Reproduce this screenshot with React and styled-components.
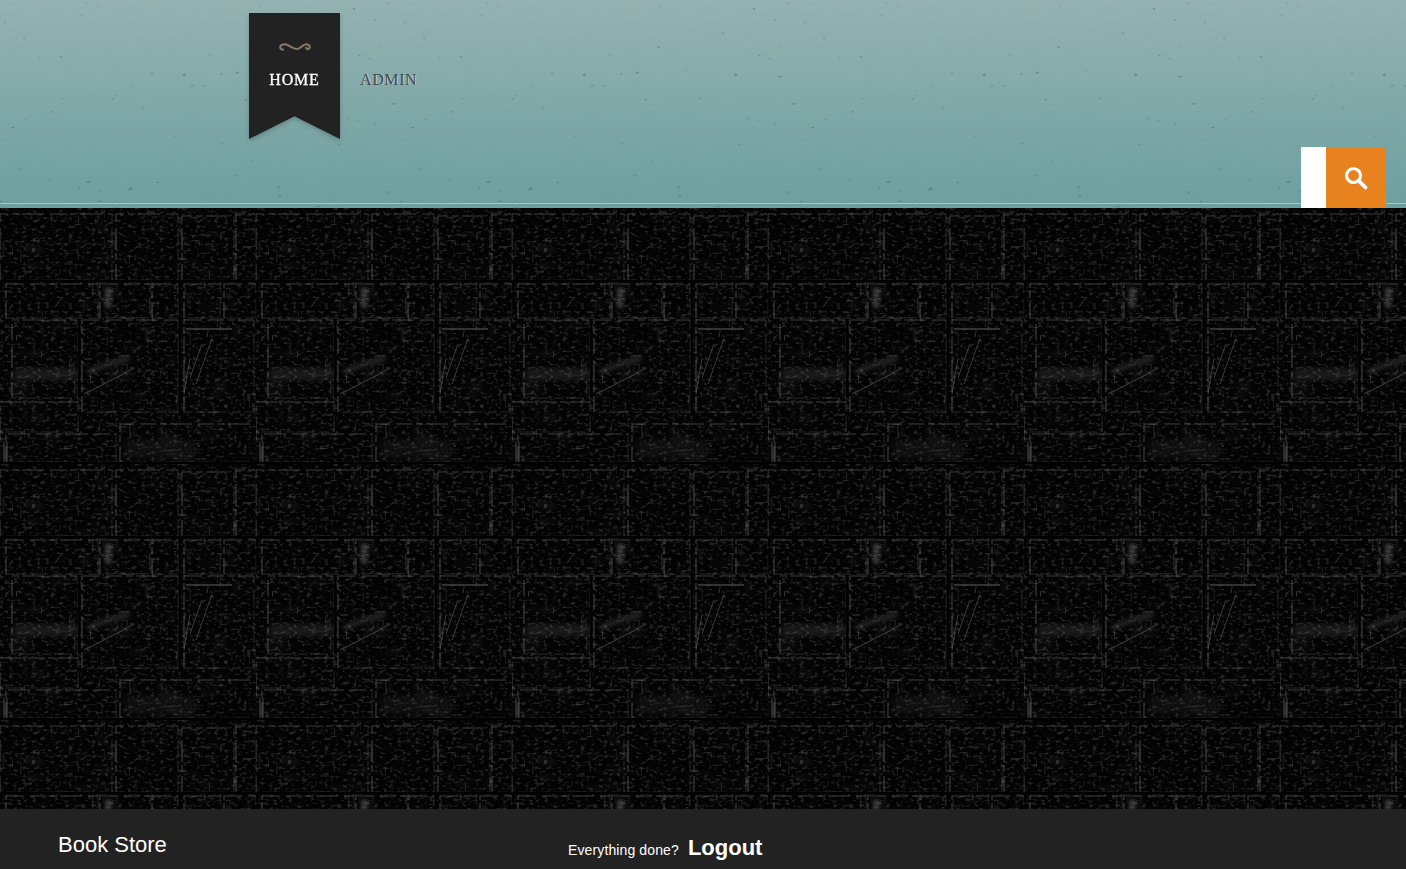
import React from "react";
import styled, { createGlobalStyle } from "styled-components";

// small seeded random so the textures come out the same every run
const makeRandom = (seed) => () => {
  seed = (seed * 16807) % 2147483647;
  return (seed - 1) / 2147483646;
};

const toDataUrl = (w, h, body) =>
  `url("data:image/svg+xml,${encodeURIComponent(
    `<svg xmlns='http://www.w3.org/2000/svg' width='${w}' height='${h}'>${body}</svg>`
  )}")`;

// stone blocks of the wall tile, x y w h
const stones = [
  [0, 6, 112, 66], [116, 6, 62, 66], [182, 8, 52, 64], [236, 6, 20, 66],
  [6, 76, 92, 34], [100, 76, 50, 34], [152, 76, 26, 34], [184, 76, 36, 34], [224, 76, 32, 34],
  [12, 112, 66, 78], [82, 112, 96, 92], [184, 112, 70, 92],
  [0, 194, 78, 30], [6, 226, 110, 28], [120, 216, 142, 38],
];

const buildWall = () => {
  const rnd = makeRandom(4711);
  let out =
    "<defs><filter id='s' x='-5%' y='-5%' width='110%' height='110%'><feGaussianBlur stdDeviation='0.6'/></filter>" +
    "<filter id='b' x='-5%' y='-5%' width='110%' height='110%'><feGaussianBlur stdDeviation='2'/></filter>" +
    "<filter id='g' x='0' y='0' width='100%' height='100%'><feTurbulence type='fractalNoise' baseFrequency='0.22 0.34' numOctaves='2' seed='8' stitchTiles='stitch'/>" +
    "<feColorMatrix values='0 0 0 0 0.6 0 0 0 0 0.6 0 0 0 0 0.6 6 0 0 0 -3.4'/><feGaussianBlur stdDeviation='0.5'/></filter></defs>" +
    "<rect width='256' height='256' fill='#030303'/>" +
    "<rect width='256' height='256' filter='url(#g)' opacity='0.16'/>";

  // dull patches inside the stones
  out += "<g filter='url(#b)'>";
  for (let i = 0; i < 70; i++) {
    const x = rnd() * 256;
    const y = rnd() * 256;
    out += `<rect x='${x.toFixed(1)}' y='${y.toFixed(1)}' width='${(5 + rnd() * 20).toFixed(1)}' height='${(2 + rnd() * 9).toFixed(1)}' fill='#fff' opacity='${(0.01 + rnd() * 0.035).toFixed(3)}'/>`;
  }
  out += "<path d='M88 164L108 156L130 150' stroke='#777' stroke-width='5' fill='none' opacity='0.3'/>";
  out += "<path d='M14 160H78V172H14Z' fill='#777' opacity='0.18'/>";
  out += "<path d='M108 80V100' stroke='#999' stroke-width='5' opacity='0.4'/>";
  out += "<path d='M126 232H196V250H126Z' fill='#666' opacity='0.12'/>";
  out += "</g>";

  // scratches, mostly along the axes
  out += "<g filter='url(#s)'>";
  for (let i = 0; i < 560; i++) {
    const x = rnd() * 256;
    const y = rnd() * 256;
    const len = 2 + rnd() * 8;
    const kind = rnd();
    const dx = kind < 0.5 ? len : kind < 0.85 ? 0 : len * 0.7;
    const dy = kind < 0.5 ? 0 : kind < 0.85 ? len : -len * 0.7;
    const shade = 70 + Math.floor(rnd() * 80);
    out += `<path d='M${x.toFixed(1)} ${y.toFixed(1)}l${dx.toFixed(1)} ${dy.toFixed(1)}' stroke='rgb(${shade},${shade},${shade})' opacity='${(0.1 + rnd() * 0.22).toFixed(2)}'/>`;
  }

  // block edges, lit on the top and left, broken up
  stones.forEach(([x, y, w, h]) => {
    out += `<path d='M${x} ${y + h}V${y}H${x + w}' fill='none' stroke='#888' stroke-width='1.2' stroke-dasharray='16 4 7 3 22 6' opacity='0.42'/>`;
    out += `<path d='M${x + w} ${y}V${y + h}H${x}' fill='none' stroke='#777' stroke-dasharray='9 5 18 3' opacity='0.3'/>`;
  });

  // marks that stand out on the real tile
  out += "<path d='M84 186L112 172L134 160' stroke='#777' fill='none' opacity='0.5'/>";
  out += "<path d='M190 150L184 186M202 136L190 170M212 130L196 176' stroke='#888' fill='none' opacity='0.42'/>";
  out += "<path d='M186 121H232' stroke='#999' stroke-width='1.5' opacity='0.42'/>";
  out += "<circle cx='149' cy='167' r='5' fill='none' stroke='#888' stroke-dasharray='1 1' opacity='0.45'/>";
  out += "<path d='M4 234V254M7 234V254' stroke='#888' opacity='0.5'/>";
  out += "</g>";

  // mortar gaps
  out += "<path d='M0 73H256M180 76V204M79 112V190M0 255H256' stroke='#000' stroke-width='2.5'/>";
  return toDataUrl(256, 256, out);
};

const buildPaper = () => {
  const rnd = makeRandom(91);
  let out =
    "<defs><filter id='p'><feGaussianBlur stdDeviation='0.5'/></filter>" +
    "<filter id='n' x='0' y='0' width='100%' height='100%'><feTurbulence type='fractalNoise' baseFrequency='0.05 0.45' numOctaves='2' seed='3' stitchTiles='stitch'/>" +
    "<feColorMatrix values='0 0 0 0 0.15 0 0 0 0 0.3 0 0 0 0 0.3 1.6 0 0 0 -0.6'/></filter></defs>";
  out += "<rect width='400' height='208' filter='url(#n)' opacity='0.12'/><g filter='url(#p)'>";
  for (let i = 0; i < 75; i++) {
    const x = rnd() * 400;
    const y = rnd() * 208;
    const size = 0.5 + rnd() * 0.7;
    out += `<ellipse cx='${x.toFixed(1)}' cy='${y.toFixed(1)}' rx='${(size * (1 + rnd())).toFixed(1)}' ry='${size.toFixed(1)}' fill='#2f5355' opacity='${(0.1 + rnd() * 0.3).toFixed(2)}'/>`;
  }
  out += "</g>";
  return toDataUrl(400, 208, out);
};

const GlobalStyle = createGlobalStyle`
  html,
  body {
    margin: 0;
    padding: 0;
    height: 100%;
  }

  body {
    background: #050505;
    font-family: "Liberation Sans", Arial, sans-serif;
  }
`;

const Page = styled.div`
  display: flex;
  flex-direction: column;
  min-height: 100vh;
`;

const Header = styled.header`
  position: relative;
  box-sizing: border-box;
  height: 208px;
  display: flex;
  align-items: flex-end;
  justify-content: space-between;
  padding: 0 20px 0 249px;
  background-image: ${buildPaper()}, linear-gradient(#96b3b2 0%, #87acab 35%, #77a4a4 75%, #6e9f9f 100%);

  &::after {
    content: "";
    position: absolute;
    left: 0;
    right: 0;
    bottom: 4px;
    height: 1px;
    background: #a9c6c4;
  }
`;

const Nav = styled.nav`
  align-self: flex-start;
  display: flex;
  align-items: flex-start;
  padding-top: 13px;
`;

const NavItem = styled.a`
  position: relative;
  z-index: 0;
  box-sizing: border-box;
  display: flex;
  flex-direction: column;
  align-items: center;
  font-family: "Liberation Serif", "Times New Roman", serif;
  font-size: 16px;
  letter-spacing: ${(p) => (p.$active ? "0.8px" : "0.6px")};
  line-height: 18px;
  text-transform: uppercase;
  width: ${(p) => (p.$active ? "91px" : "auto")};
  height: ${(p) => (p.$active ? "126px" : "auto")};
  padding-top: ${(p) => (p.$active ? "28px" : "58px")};
  margin-right: ${(p) => (p.$active ? "20px" : "0")};
  color: ${(p) => (p.$active ? "#ffffff" : "#414c4d")};
  text-shadow: ${(p) => (p.$active ? "none" : "1px 0 0 rgba(225, 240, 240, 0.55)")};
  -webkit-text-stroke: ${(p) => (p.$active ? "0.3px #ffffff" : "0")};
  filter: ${(p) => (p.$active ? "drop-shadow(0 2px 2px rgba(30, 50, 50, 0.3))" : "none")};

  &::before {
    content: "";
    display: ${(p) => (p.$active ? "block" : "none")};
    position: absolute;
    inset: 0;
    z-index: -1;
    background: #222222;
    clip-path: polygon(0 0, 100% 0, 100% 100%, 50% 82%, 0 100%);
  }
`;

const Flourish = styled.svg`
  display: block;
  width: 34px;
  height: 12px;
  margin-bottom: 18px;
`;

const SearchForm = styled.form`
  position: relative;
  z-index: 1;
  display: flex;
  height: 61px;
`;

const SearchInput = styled.input`
  box-sizing: border-box;
  width: 25px;
  padding: 0;
  border: 0;
  outline: 0;
  background: #ffffff;
`;

const SearchButton = styled.button`
  width: 60px;
  padding: 0 1px 0 0;
  border: 0;
  background: #e8821f;
  display: flex;
  align-items: center;
  justify-content: center;
`;

const Main = styled.main`
  flex: 1;
  background-color: #050505;
  background-image: ${buildWall()};
  background-repeat: repeat;
`;

const Footer = styled.footer`
  box-sizing: border-box;
  height: 60px;
  flex-shrink: 0;
  display: flex;
  background: #222222;
  color: #ffffff;
  padding-left: 58px;
`;

const Brand = styled.div`
  width: 510px;
  padding-top: 22px;
  font-size: 22px;
  line-height: 28px;
`;

const Farewell = styled.div`
  padding-top: 25px;
  display: flex;
  align-items: baseline;
  gap: 9px;
  font-size: 14px;
  line-height: 28px;
  letter-spacing: 0.12px;
`;

const Logout = styled.a`
  font-size: 22px;
  font-weight: bold;
  letter-spacing: 0;
`;

const App = () => {
  return (
    <Page>
      <GlobalStyle />
      <Header>
        <Nav>
          <NavItem $active>
            <Flourish viewBox="0 0 34 12" fill="none">
              <path
                d="M5 8.6C2.8 8.8 1.6 7 2.4 5.2C3.3 3.2 6.6 2.9 9 3.8C12.5 5.1 15 8 19 8C23 8 24.6 3 28.4 3.2C31 3.4 32.4 5.4 31.4 7.2C30.6 8.6 28.4 8.4 28.2 6.8"
                stroke="#857a6a"
                strokeWidth="2.1"
                strokeLinecap="round"
              />
            </Flourish>
            Home
          </NavItem>
          <NavItem>Admin</NavItem>
        </Nav>
        <SearchForm>
          <SearchInput type="text" />
          <SearchButton type="button">
            <svg width="26" height="26" viewBox="0 0 26 26" fill="none">
              <circle cx="10.5" cy="10.5" r="7" stroke="#fff" strokeWidth="3.2" />
              <path d="M15.8 15.8L22.5 22.5" stroke="#fff" strokeWidth="3.8" strokeLinecap="round" />
            </svg>
          </SearchButton>
        </SearchForm>
      </Header>
      <Main />
      <Footer>
        <Brand>Book Store</Brand>
        <Farewell>
          Everything done?
          <Logout>Logout</Logout>
        </Farewell>
      </Footer>
    </Page>
  );
};

export default App;
